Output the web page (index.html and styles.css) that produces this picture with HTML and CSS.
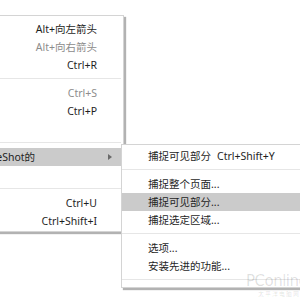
FILE: index.html
```html
<!DOCTYPE html>
<html lang="zh-CN">
<head>
    <meta charset="UTF-8">
    <title>右键菜单</title>
    <link rel="stylesheet" href="styles.css">
</head>
<body>
    <div class="screen">
        <div class="menu main-menu">
            <div class="item"><span class="label"></span><span class="key">Alt+向左箭头</span></div>
            <div class="item disabled"><span class="label"></span><span class="key">Alt+向右箭头</span></div>
            <div class="item"><span class="label"></span><span class="key">Ctrl+R</span></div>
            <div class="sep"></div>
            <div class="item disabled"><span class="label"></span><span class="key">Ctrl+S</span></div>
            <div class="item"><span class="label"></span><span class="key">Ctrl+P</span></div>
            <div class="item"><span class="label"></span><span class="key"></span></div>
            <div class="sep"></div>
            <div class="item active"><span class="label">FireShot的</span><span class="key"></span><span class="arrow"></span></div>
            <div class="item"><span class="label"></span><span class="key"></span></div>
            <div class="sep"></div>
            <div class="item"><span class="label"></span><span class="key">Ctrl+U</span></div>
            <div class="item"><span class="label"></span><span class="key">Ctrl+Shift+I</span></div>
        </div>

        <div class="menu sub-menu">
            <div class="item"><span class="label">捕捉可见部分</span><span class="key">Ctrl+Shift+Y</span></div>
            <div class="sep"></div>
            <div class="item"><span class="label">捕捉整个页面...</span></div>
            <div class="item active"><span class="label">捕捉可见部分...</span></div>
            <div class="item"><span class="label">捕捉选定区域...</span></div>
            <div class="sep"></div>
            <div class="item"><span class="label">选项...</span></div>
            <div class="item"><span class="label">安装先进的功能...</span></div>
            <div class="sep"></div>
        </div>

        <div class="watermark">
            <span class="wm-logo">PConline</span>
            <span class="wm-sub">太平洋电脑网</span>
        </div>
    </div>
</body>
</html>
```

FILE: styles.css
```css
body {
    margin: 0;
    background-color: #ffffff;
    font-family: "Noto Sans", "Noto Sans CJK SC", sans-serif;
    font-size: 10.5px;
    color: #1e1e1e;
}
.screen {
    position: relative;
    width: 300px;
    height: 300px;
    overflow: hidden;
}
.menu {
    box-sizing: border-box;
    background-color: #ffffff;
    border: 1px solid #d4d4d4;
    box-shadow: 2px 2px 1px rgba(0, 0, 0, 0.3);
}
.main-menu {
    width: 142px;
    margin-left: -18px;
    margin-top: 15px;
    padding: 4px 8px 1px 6px;
}
.main-menu .item {
    display: grid;
    grid-template-columns: 1fr auto 18px;
    margin: 0 -8px 0 -6px;
    padding: 0 8px 0 6px;
}
.main-menu .label {
    margin-left: -5px;
}
.item {
    height: 18px;
    line-height: 18px;
    white-space: nowrap;
}
.item.disabled {
    color: #8c8c8c;
}
.item.active {
    background-color: #cbcbcb;
}
.key {
    text-align: right;
}
.arrow {
    justify-self: end;
    align-self: center;
    margin-right: 3px;
    width: 0;
    height: 0;
    border-top: 3px solid transparent;
    border-bottom: 3px solid transparent;
    border-left: 4px solid #6a6a6a;
}
.sep {
    height: 10px;
    position: relative;
}
.sep::after {
    content: "";
    position: absolute;
    left: 0;
    right: 0;
    top: 4px;
    border-top: 1px solid #e6e6e6;
}
.main-menu .sep {
    margin: 0 -6px;
}
.sub-menu {
    position: absolute;
    left: 121px;
    top: 144px;
    width: 200px;
    padding: 2px 0 2px 0;
}
.sub-menu .item {
    display: grid;
    grid-template-columns: 69px auto;
    padding-left: 26px;
}
.sub-menu .key {
    text-align: left;
}
.watermark {
    position: absolute;
    left: 246px;
    top: 274px;
    display: flex;
    flex-direction: column;
    align-items: flex-start;
    gap: 2px;
    color: rgba(0, 0, 0, 0.13);
    line-height: 1;
}
.wm-logo {
    font-family: "DejaVu Sans", sans-serif;
    font-size: 15px;
    letter-spacing: -0.5px;
}
.wm-sub {
    margin-left: 12px;
    font-size: 6px;
    letter-spacing: 1px;
}
```
